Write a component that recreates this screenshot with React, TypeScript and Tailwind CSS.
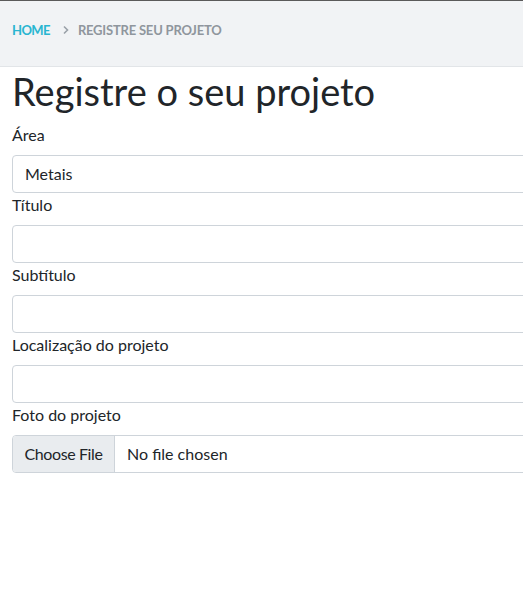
const fields = [
  { label: "Área", value: "Metais" },
  { label: "Título", value: "" },
  { label: "Subtítulo", value: "" },
  { label: "Localização do projeto", value: "" },
]

export default function App() {
  return (
    <div className="min-h-screen w-screen overflow-hidden bg-white font-['Lato',sans-serif] text-[#212529]">
      {/* Breadcrumb bar */}
      <div className="h-[67px] w-[600px] border-t border-b border-t-[#5a5a5a] border-b-[#e2e5e8] bg-[#f1f3f5]">
        <nav className="flex items-center px-3 pt-[19px] text-[13px] leading-5 font-bold uppercase tracking-[-0.2px]">
          <a href="#" className="tracking-[-0.6px] text-[#29b6d1]">Home</a>
          <svg width="8" height="10" viewBox="0 0 8 10" className="ml-[12px] text-[#9aa1a8]">
            <path d="M2 1.5 L5.5 5 L2 8.5" fill="none" stroke="currentColor" strokeWidth="1.6" />
          </svg>
          <span className="ml-[8px] text-[#8f969d]">Registre seu projeto</span>
        </nav>
      </div>

      <div className="w-[600px] px-3">
        <h1 className="mb-2 text-[38px] leading-[48px] font-normal">Registre o seu projeto</h1>

        {fields.map((f) => (
          <div key={f.label}>
            <label className="mb-2 block text-base leading-6">{f.label}</label>
            <div className="flex h-[38px] items-center rounded border border-[#ced4da] px-3 text-base">
              {f.value}
            </div>
          </div>
        ))}

        <label className="mb-2 block text-base leading-6">Foto do projeto</label>
        <div className="flex h-[38px] items-stretch overflow-hidden rounded border border-[#ced4da] text-base">
          <div className="flex w-[102px] items-center justify-center border-r border-[#ced4da] bg-[#e9ecef] tracking-[-0.4px]">
            Choose File
          </div>
          <div className="flex items-center px-3">No file chosen</div>
        </div>
      </div>
    </div>
  )
}
